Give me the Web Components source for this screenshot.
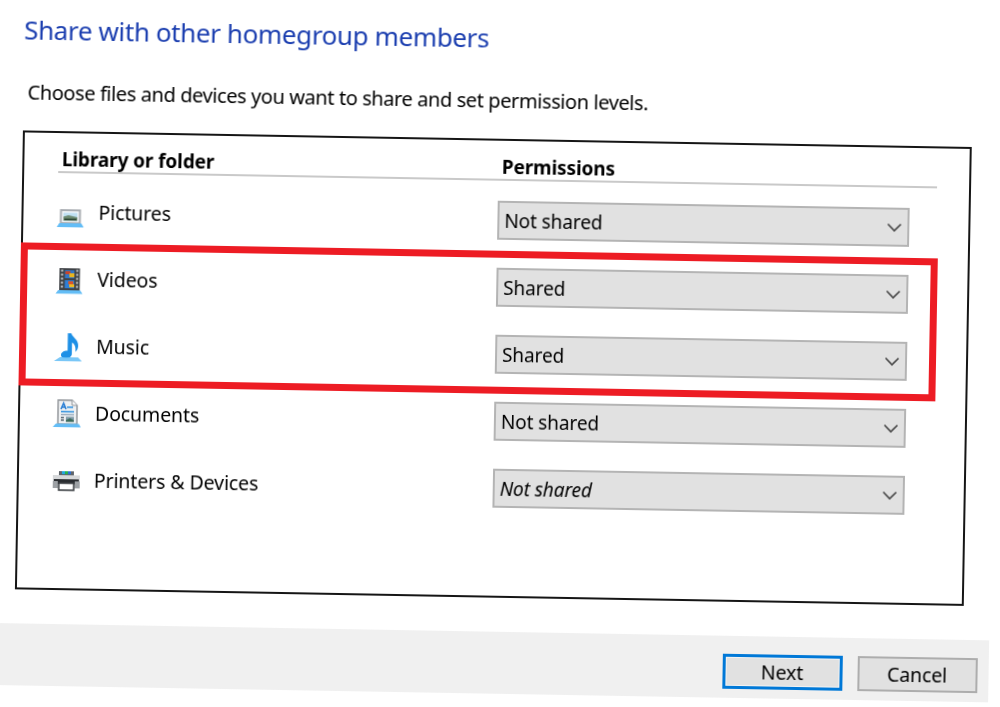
<!DOCTYPE html>
<html>
<head>
<meta charset="utf-8">
<title>Share with other homegroup members</title>
<style>
  html, body { margin: 0; padding: 0; background: #fff; overflow: hidden; }
  body { font-family: "Noto Sans", "Liberation Sans", sans-serif; color: #000; }
</style>
</head>
<body>
<share-dialog>
  <span slot="title">Share with other homegroup members</span>
  <span slot="intro">Choose files and devices you want to share and set permission levels.</span>
  <perm-row icon="pictures" label="Pictures" value="Not shared"></perm-row>
  <perm-row icon="videos" label="Videos" value="Shared"></perm-row>
  <perm-row icon="music" label="Music" value="Shared"></perm-row>
  <perm-row icon="documents" label="Documents" value="Not shared"></perm-row>
  <perm-row icon="printers" label="Printers &amp; Devices" value="Not shared" slanted></perm-row>
  <wiz-button slot="buttons" primary>Next</wiz-button>
  <wiz-button slot="buttons">Cancel</wiz-button>
</share-dialog>

<script>
const ICONS = {
  pictures: `
    <rect x="3.5" y="11" width="21" height="15" fill="#a9adb2"/>
    <rect x="5.5" y="13" width="17" height="11" fill="#f4f6f8"/>
    <rect x="7" y="14.5" width="14" height="8" fill="#bfe0f2"/>
    <path d="M7 18.5 L12 17 L21 19 V22.5 H7 Z" fill="#6d8a70"/>
    <path d="M8 20.5 H20 V22 H8 Z" fill="#26402f"/>
    <path d="M3 25 H25 L27.5 29 H0.5 Z" fill="#63bdf6"/>`,
  videos: `
    <rect x="4" y="3" width="20.5" height="22" fill="#3f4246"/>
    <path d="M5.7 4.5 h2 v2 h-2 Z M5.7 8.5 h2 v2 h-2 Z M5.7 12.5 h2 v2 h-2 Z M5.7 16.5 h2 v2 h-2 Z M5.7 20.5 h2 v2 h-2 Z M20.8 4.5 h2 v2 h-2 Z M20.8 8.5 h2 v2 h-2 Z M20.8 12.5 h2 v2 h-2 Z M20.8 16.5 h2 v2 h-2 Z M20.8 20.5 h2 v2 h-2 Z" fill="#c9ccd0"/>
    <rect x="9.5" y="5" width="9.5" height="8" fill="#3277c8"/>
    <path d="M10 6 h5 v3 h-5 Z" fill="#c8452c"/>
    <path d="M14 8 h5 v4 h-5 Z" fill="#e9b51f"/>
    <rect x="9.5" y="15" width="9.5" height="8" fill="#2f7fd6"/>
    <path d="M13 16 h5 v3 h-5 Z" fill="#d9542a"/>
    <path d="M14 19 h5 v3 h-5 Z" fill="#edbb24"/>
    <path d="M3 25 H25 L27.5 28.5 H0.5 Z" fill="#63bdf6"/>`,
  music: `
    <path d="M13.5 1 H17 C18 5 24.5 7 24 14 C23.7 17 22.6 18.4 21.4 19.4 C21.8 14.6 20.6 11.6 17.8 10.3 V21.5 C17.8 24.8 14.8 26 11.5 26 C8.2 26 6.6 24.2 7 22.2 C7.4 20 10.2 18.4 13 18.4 C13.5 18.4 13.5 18.5 13.5 18.6 Z" fill="#1e90e6"/>
    <path d="M6 25 H24 L28 29 H0 Z" fill="#63bdf6" opacity=".85"/>`,
  documents: `
    <path d="M5 1 H19 L24 6 V25 H5 Z" fill="#eef0f2" stroke="#8f9398" stroke-width="1.4"/>
    <path d="M19 1 V6 H24" fill="#fff" stroke="#8f9398" stroke-width="1"/>
    <path d="M8 10 L10.5 4 L13 10 M9 8 H12" fill="none" stroke="#2b7fd4" stroke-width="1.6"/>
    <path d="M14 8 H20 M8 12.5 H21" stroke="#2b8fe0" stroke-width="1.4"/>
    <path d="M8 15.5 H21" stroke="#8fa4b8" stroke-width="1.2"/>
    <path d="M8 18.5 H11 M8 21 H11" stroke="#55636f" stroke-width="1.3"/>
    <rect x="13" y="17.5" width="8" height="5" fill="#7f9aa8"/>
    <path d="M13 21 L17 19 L21 21 V22.5 H13 Z" fill="#3a6a58"/>
    <path d="M3 24.5 H26 L28 28 H0 Z" fill="#63bdf6"/>`,
  printers: `
    <rect x="7" y="5" width="15" height="5" fill="#5f656b"/>
    <rect x="10" y="5" width="3" height="3" fill="#21a6df"/>
    <rect x="13" y="5" width="3" height="3" fill="#25b04f"/>
    <rect x="16" y="5" width="3" height="3" fill="#2b6fd4"/>
    <rect x="1" y="9" width="27" height="8" fill="#d6d8da"/>
    <rect x="2" y="13" width="25" height="5" fill="#2a2d31"/>
    <path d="M1 15 H6 V22 H1 Z M23 15 H28 V22 H23 Z" fill="#9da1a5"/>
    <rect x="7" y="17" width="15" height="7" fill="#fff" stroke="#3c4044" stroke-width="1.6"/>`
};

class ShareDialog extends HTMLElement {
  constructor() {
    super();
    this.attachShadow({ mode: "open" }).innerHTML = `
    <style>
      :host { display: block; width: 1000px; height: 707px; transform: rotate(1deg); transform-origin: 0 0; filter: blur(0.35px); }
      .title { height: 36px; margin: 11px 0 0 24.5px; font-size: 26px; line-height: 36px; color: #1c3fb0; letter-spacing: -0.38px; white-space: nowrap; }
      .intro { height: 28px; margin: 31px 0 0 29px; font-size: 20px; line-height: 28px; letter-spacing: -0.41px; white-space: nowrap; }
      .panel { position: relative; box-sizing: border-box; width: 949px; height: 459px; margin: 24px 0 0 25px; border: 2px solid #151515; background: #fff; }
      .head { display: grid; grid-template-columns: 440px 1fr; width: 879px; box-sizing: border-box; height: 40px; margin: 0 0 20px 34px; padding: 13.5px 0 0 3.5px; border-bottom: 2px solid #c9c9c9; font-weight: 700; font-size: 19px; line-height: 25px; letter-spacing: -0.1px; }
      .rows { display: flex; flex-direction: column; gap: 28px; }
      .mark { position: absolute; left: -2px; top: 110px; box-sizing: border-box; width: 917px; height: 143px; border: 7px solid #ed1c24; }
      .foot { display: flex; justify-content: flex-end; gap: 15px; box-sizing: border-box; height: 62px; margin-top: 34px; padding: 18px 11.5px 0 0; background: #f0f0f0; }
    </style>
    <div class="title"><slot name="title"></slot></div>
    <div class="intro"><slot name="intro"></slot></div>
    <div class="panel">
      <div class="head"><div>Library or folder</div><div>Permissions</div></div>
      <div class="rows"><slot></slot></div>
      <div class="mark"></div>
    </div>
    <div class="foot"><slot name="buttons"></slot></div>`;
  }
}

class PermRow extends HTMLElement {
  connectedCallback() {
    const shadow = this.attachShadow({ mode: "open" });
    shadow.innerHTML = `
    <style>
      :host { display: grid; grid-template-columns: 473.5px 412px; height: 39px; }
      .name { display: flex; align-items: center; gap: 12px; padding-left: 33px; font-size: 19.5px; letter-spacing: -0.1px; }
      .name span { padding-bottom: 2px; }
      svg { display: block; width: 30px; height: 30px; flex: none; }
    </style>
    <div class="name">
      <svg viewBox="0 0 30 30">${ICONS[this.getAttribute("icon")]}</svg>
      <span>${this.getAttribute("label").replace("&", "&amp;")}</span>
    </div>
    <drop-down ${this.hasAttribute("slanted") ? "slanted" : ""}>${this.getAttribute("value")}</drop-down>`;
  }
}

class DropDown extends HTMLElement {
  constructor() {
    super();
    this.attachShadow({ mode: "open" }).innerHTML = `
    <style>
      :host { display: flex; align-items: center; justify-content: space-between; box-sizing: border-box; height: 39px; padding: 0 5px 0 5.5px; background: #e1e1e1; border: 2px solid #b4b4b4; font-size: 19px; letter-spacing: -0.1px; }
      :host([slanted]) { font-style: italic; }
      svg { display: block; width: 16px; height: 10px; }
    </style>
    <span><slot></slot></span>
    <svg viewBox="0 0 16 10"><path d="M1.5 1.5 L8 8 L14.5 1.5" fill="none" stroke="#444" stroke-width="1.6"/></svg>`;
  }
}

class WizButton extends HTMLElement {
  constructor() {
    super();
    this.attachShadow({ mode: "open" }).innerHTML = `
    <style>
      :host { display: flex; align-items: center; justify-content: center; box-sizing: border-box; width: 120px; height: 35px; background: #e1e1e1; border: 2px solid #adadad; font-size: 19.5px; letter-spacing: -0.1px; }
      :host([primary]) { border: 3px solid #0078d7; box-shadow: inset 0 0 0 1px #f3f3f3; }
    </style>
    <slot></slot>`;
  }
}

customElements.define("share-dialog", ShareDialog);
customElements.define("perm-row", PermRow);
customElements.define("drop-down", DropDown);
customElements.define("wiz-button", WizButton);
</script>
</body>
</html>
